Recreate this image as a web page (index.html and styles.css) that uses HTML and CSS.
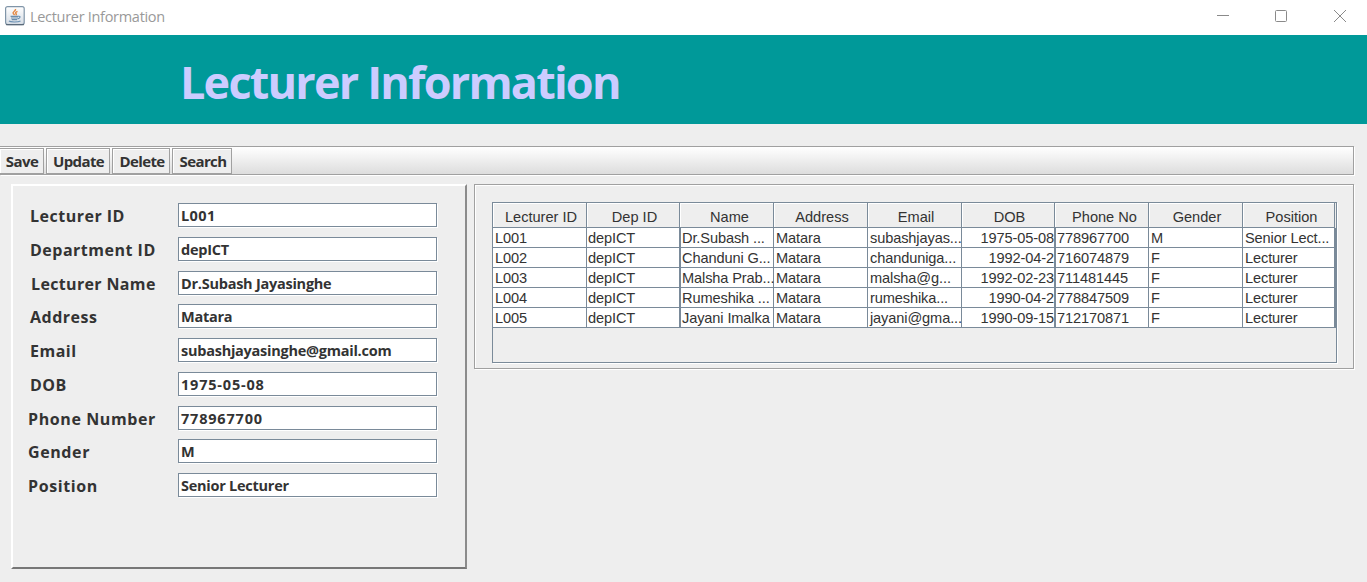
FILE: index.html
```html
<!DOCTYPE html>
<html lang="en">
<head>
<meta charset="utf-8">
<title>Lecturer Information</title>
<link rel="stylesheet" href="styles.css">
</head>
<body>
<header class="titlebar">
  <svg class="app-icon" width="20" height="20" viewBox="0 0 20 20">
    <defs><linearGradient id="tile" x1="0" y1="0" x2="0" y2="1"><stop offset="0" stop-color="#fff"/><stop offset="1" stop-color="#d5dce4"/></linearGradient></defs>
    <rect x=".6" y=".6" width="18.6" height="18" rx="2" fill="url(#tile)" stroke="#8095a8" stroke-width="1.2"/>
    <path d="M1 18.7h18" stroke="#52606f" stroke-width="1"/>
    <path d="M10.500 3c.8 2-3.600 2.600-2.200 4.600L9.600 9M12.500 5.400c-2 .8-2.400 1.500-1.300 2.500.5.6-.1 1-.6 1.300" fill="none" stroke="#e58a46" stroke-width="1.500"/>
    <path d="M5.600 10.300h8M6 12h7M6.700 13.700h5.500" fill="none" stroke="#6c8dab" stroke-width="1.200"/>
    <path d="M13.400 10.300c2.600-.4 2 2-.6 2.600M4 15c1.500 1.300 9 1.300 11.500-.1" fill="none" stroke="#6b91b4" stroke-width="1.100"/>
  </svg>
  <span class="window-title">Lecturer Information</span>
  <svg class="controls" width="132" height="14" viewBox="0 0 132 14" fill="none" stroke="#8a8a8a">
    <path d="M1 6.500h12"/>
    <rect x="59.500" y="1.500" width="11" height="11" rx="1"/>
    <path d="M118 1l12 12M130 1l-12 12"/>
  </svg>
</header>
<div class="banner"><h1>Lecturer Information</h1></div>
<nav class="toolbar">
  <button class="save"><span>Save</span></button>
  <button class="update"><span>Update</span></button>
  <button class="delete"><span>Delete</span></button>
  <button class="search"><span>Search</span></button>
</nav>
<main>
  <section class="form">
    <div class="row"><label>Lecturer ID</label><div class="field num"><span>L001</span></div></div>
    <div class="row"><label>Department ID</label><div class="field"><span>depICT</span></div></div>
    <div class="row indent"><label>Lecturer Name</label><div class="field"><span>Dr.Subash Jayasinghe</span></div></div>
    <div class="row"><label>Address</label><div class="field"><span>Matara</span></div></div>
    <div class="row"><label>Email</label><div class="field"><span>subashjayasinghe@gmail.com</span></div></div>
    <div class="row"><label>DOB</label><div class="field num"><span>1975-05-08</span></div></div>
    <div class="row outdent"><label>Phone Number</label><div class="field num"><span>778967700</span></div></div>
    <div class="row outdent"><label>Gender</label><div class="field"><span>M</span></div></div>
    <div class="row outdent"><label>Position</label><div class="field"><span>Senior Lecturer</span></div></div>
  </section>
  <section class="list">
    <div class="scroll">
      <div class="tr head"><div>Lecturer ID</div><div>Dep ID</div><div>Name</div><div>Address</div><div>Email</div><div>DOB</div><div>Phone No</div><div>Gender</div><div>Position</div></div>
      <div class="tr"><div>L001</div><div>depICT</div><div>Dr.Subash ...</div><div>Matara</div><div>subashjayas...</div><div>1975-05-08</div><div>778967700</div><div>M</div><div>Senior Lect...</div></div>
      <div class="tr"><div>L002</div><div>depICT</div><div>Chanduni G...</div><div>Matara</div><div>chanduniga...</div><div>1992-04-2</div><div>716074879</div><div>F</div><div>Lecturer</div></div>
      <div class="tr"><div>L003</div><div>depICT</div><div>Malsha Prab...</div><div>Matara</div><div>malsha@g...</div><div>1992-02-23</div><div>711481445</div><div>F</div><div>Lecturer</div></div>
      <div class="tr"><div>L004</div><div>depICT</div><div>Rumeshika ...</div><div>Matara</div><div>rumeshika...</div><div>1990-04-2</div><div>778847509</div><div>F</div><div>Lecturer</div></div>
      <div class="tr"><div>L005</div><div>depICT</div><div>Jayani Imalka</div><div>Matara</div><div>jayani@gma...</div><div>1990-09-15</div><div>712170871</div><div>F</div><div>Lecturer</div></div>
    </div>
  </section>
</main>
</body>
</html>
```
FILE: styles.css
```css
* { box-sizing: border-box; }
body {
  margin: 0;
  height: 582px;
  overflow: hidden;
  background: #eee;
  color: #333;
  font-family: "Open Sans", "Noto Sans", sans-serif;
}
.titlebar {
  display: flex;
  align-items: center;
  height: 35px;
  padding: 0 19px 3px 5px;
  background: #fff;
}
.app-icon { margin-top: -1px; }
.window-title {
  margin: 1px 0 0 5px;
  color: #999;
  font-size: 14.500px;
  line-height: 20px;
  letter-spacing: -0.3px;
  white-space: nowrap;
}
.controls { margin-left: auto; }
.banner {
  height: 89px;
  padding: 16px 0 0 180px;
  background: #009999;
}
h1 {
  margin: 0;
  color: #ccccff;
  font-size: 45px;
  font-weight: 700;
  line-height: 61px;
  letter-spacing: -1.800px;
  white-space: nowrap;
}
.toolbar {
  display: flex;
  gap: 2px;
  width: 1354px;
  height: 29px;
  margin-top: 22px;
  padding-top: 1px;
  border: 1px solid #a0a0a0;
  border-left: 0;
  background: linear-gradient(#fff, #ddd);
  box-shadow: 1px 1px #fff;
}
.toolbar button {
  height: 26px;
  padding: 0 0 0 1px;
  border: 1px solid #a0a0a0;
  background: #eee;
  box-shadow: inset 1px 1px #fff;
  color: #333;
  font: 700 15px/24px "Open Sans", "Noto Sans", sans-serif;
  letter-spacing: -0.600px;
  white-space: nowrap;
}
.toolbar .save { width: 44px; border-left: 0; }
.toolbar .update { width: 64px; }
.toolbar .delete { width: 58px; padding-left: 2px; }
.toolbar .search { width: 60px; padding-left: 2px; }
main {
  display: flex;
  align-items: flex-start;
  gap: 7px;
  padding: 9px 0 0 11px;
}
.form {
  width: 456px;
  height: 385px;
  padding: 17px 0 0 15px;
  border: 2px solid;
  border-color: #fff #8b8b8b #777 #fff;
}
.row {
  display: flex;
  height: 33.750px;
}
label {
  width: 150px;
  padding-left: 2px;
  font-size: 16px;
  font-weight: 700;
  line-height: 26px;
  letter-spacing: 0.500px;
  white-space: nowrap;
}
.indent label { padding-left: 3px; letter-spacing: 0.350px; }
.outdent label { padding-left: 0; letter-spacing: 0.600px; }
.field {
  width: 259px;
  height: 24px;
  padding-left: 2px;
  border: 1px solid #7a8a99;
  background: #fff;
  box-shadow: 1px 1px #fff;
  font-size: 14.500px;
  font-weight: 700;
  line-height: 24px;
  letter-spacing: -0.250px;
  white-space: nowrap;
}
.field.num { letter-spacing: 0.800px; }
.row:first-child .field { letter-spacing: 0.400px; }
.list {
  width: 880px;
  height: 185px;
  padding: 17px 0 0 17px;
  border: 1px solid #a0a0a0;
  box-shadow: inset 1px 1px #fff, 1px 1px #fff;
}
.scroll {
  width: 845px;
  height: 161px;
  border: 1px solid #7a8a99;
  box-shadow: 1px 1px #fff;
  font: 14.600px/20px "Liberation Sans", Arial, sans-serif;
  letter-spacing: -0.120px;
}
.tr {
  display: grid;
  grid-template-columns: 94px 93px 94px 94px 94px 93px 94px 94px 92px;
  height: 20px;
  background: #7a8a99;
}
.tr > div {
  height: 20px;
  padding-left: 2px;
  border-right: 1px solid #7a8a99;
  border-bottom: 1px solid #7a8a99;
  background: #fff;
  white-space: nowrap;
}
.tr > :nth-child(2) { padding-left: 1px; }
.tr:not(.head) > :nth-child(3),
.tr:not(.head) > :nth-child(7) { box-shadow: inset 1px 0 #7a8a99; }
.tr > :nth-child(6) { text-align: right; padding: 0; }
.head { height: 25px; background: #eee; }
.tr.head > div {
  height: 25px;
  padding: 2px 0 0 3px;
  background: #eee;
  box-shadow: inset 1px 1px #fff;
  line-height: 24px;
  letter-spacing: 0;
  text-align: center;
}
.tr.head > :nth-child(3),
.tr.head > :nth-child(7),
.tr.head > :nth-child(9) { padding-left: 6px; }
```
